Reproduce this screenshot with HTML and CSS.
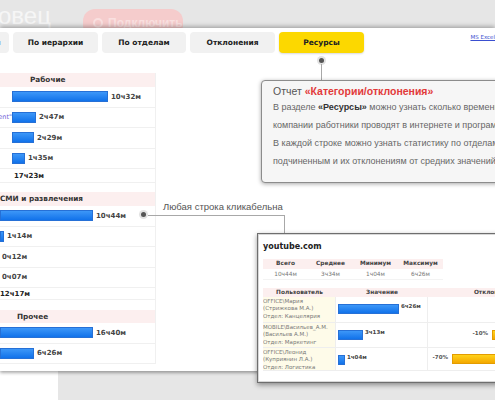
FILE: index.html
```html
<!DOCTYPE html>
<html lang="ru">
<head>
<meta charset="utf-8">
<title>Ресурсы</title>
<link rel="stylesheet" href="styles.css">
</head>
<body>
<div class="top">
  <div class="logo">овец</div>
  <div class="pill"><span class="pill-ico"></span>Подключить</div>
</div>
<div class="panel">
  <div class="tabs">
    <div class="tab tab-first">По категориям</div>
    <div class="tab">По иерархии</div>
    <div class="tab tab-84">По отделам</div>
    <div class="tab">Отклонения</div>
    <div class="tab tab-active">Ресурсы</div>
    <a class="excel">MS Excel</a>
  </div>

  <div class="left">
    <div class="sec sec1">
      <div class="sec-head">Рабочие</div>
      <div class="row"><div class="name"></div><div class="bar" style="width:96px"></div><span class="val">10ч32м</span></div>
      <div class="row"><div class="name">"Agent"</div><div class="bar" style="width:24px"></div><span class="val">2ч47м</span></div>
      <div class="row"><div class="name"></div><div class="bar" style="width:22px"></div><span class="val">2ч29м</span></div>
      <div class="row"><div class="name"></div><div class="bar" style="width:13px"></div><span class="val">1ч35м</span></div>
      <div class="total">17ч23м</div>
    </div>
    <div class="sec sec2">
      <div class="sec-head">СМИ и развлечения</div>
      <div class="row"><div class="bar" style="width:93px"></div><span class="val">10ч44м</span></div>
      <div class="row"><div class="bar" style="width:4px"></div><span class="val">1ч14м</span></div>
      <div class="row"><span class="val val-nobar">0ч12м</span></div>
      <div class="row"><span class="val val-nobar">0ч07м</span></div>
      <div class="total">12ч17м</div>
    </div>
    <div class="sec sec3">
      <div class="sec-head">Прочее</div>
      <div class="row"><div class="bar" style="width:93px"></div><span class="val">16ч40м</span></div>
      <div class="row"><div class="bar" style="width:34px"></div><span class="val">6ч26м</span></div>
    </div>
  </div>

  <div class="dot dot1"></div>
  <div class="vline vline1"></div>
  <div class="callout">
    <div class="callout-title">Отчет <b>«Категории/отклонения»</b></div>
    <p>В разделе <b>«Ресурсы»</b> можно узнать сколько времени</p>
    <p>компании работники проводят в интернете и программах.</p>
    <p>В каждой строке можно узнать статистику по отделам,</p>
    <p>подчиненным и их отклонениям от средних значений.</p>
  </div>

  <div class="dot dot2"></div>
  <div class="hline"></div>
  <div class="vline vline2"></div>
  <div class="hint">Любая строка кликабельна</div>

  <div class="popup">
    <div class="popup-title">youtube.com</div>
    <div class="sum">
      <div class="sum-h">Всего</div>
      <div class="sum-h">Среднее</div>
      <div class="sum-h">Минимум</div>
      <div class="sum-h">Максимум</div>
      <div class="sum-v">10ч44м</div>
      <div class="sum-v">3ч34м</div>
      <div class="sum-v">1ч04м</div>
      <div class="sum-v">6ч26м</div>
    </div>
    <div class="tbl">
      <div class="th">Пользователь</div>
      <div class="th">Значение</div>
      <div class="th">Отклонения</div>

      <div class="user r1">OFFICE\Мария<br>(Стрижкова М.А.)<br>Отдел: Канцелярия</div>
      <div class="value r1"><div class="bar bar-s" style="width:61px"></div><span class="pv">6ч26м</span></div>
      <div class="dev r1"></div>

      <div class="user r2">MOBILE\Васильев_А.М.<br>(Васильев А.М.)<br>Отдел: Маркетинг</div>
      <div class="value r2"><div class="bar bar-s" style="width:25px"></div><span class="pv">3ч13м</span></div>
      <div class="dev r2"><span class="dv">-10%</span><div class="obar" style="width:67px"></div></div>

      <div class="user r3">OFFICE\Леонид<br>(Куприянин Л.А.)<br>Отдел: Логистика</div>
      <div class="value r3"><div class="bar bar-s" style="width:7px"></div><span class="pv">1ч04м</span></div>
      <div class="dev r3"><span class="dv">-70%</span><div class="obar" style="width:107px"></div></div>
    </div>
  </div>
</div>
<div class="below"><div class="below-white"></div></div>
</body>
</html>
```

FILE: styles.css
```css
html, body {
  margin: 0;
  padding: 0;
}
body {
  width: 495px;
  height: 400px;
  overflow: hidden;
  background: #e6e6e6;
  font-family: "DejaVu Sans", Verdana, sans-serif;
}

/* top band */
.top {
  height: 28px;
  overflow: hidden;
  display: flex;
  align-items: flex-start;
}
.logo {
  width: 85px;
  flex: none;
  margin-top: 3px;
  margin-left: -2px;
  font-family: "Liberation Sans", Arial, sans-serif;
  font-size: 24px;
  line-height: 26px;
  color: #f6f6f6;
}
.pill {
  flex: none;
  width: 100px;
  height: 28px;
  margin-top: 9px;
  padding-left: 10px;
  box-sizing: border-box;
  border-radius: 12px;
  background: #f5cccc;
  display: flex;
  align-items: center;
  gap: 5px;
  font-family: "Liberation Sans", Arial, sans-serif;
  font-weight: bold;
  font-size: 12px;
  color: #f9e0e0;
}
.pill-ico {
  width: 10px;
  height: 10px;
  border-radius: 50%;
  border: 2px solid #f9e0e0;
  box-sizing: border-box;
}

/* main panel */
.panel {
  position: relative;
  z-index: 1;
  height: 343px;
  background: #fff;
  box-shadow: 0 -2px 4px rgba(0, 0, 0, 0.25), 0 2px 3px rgba(0, 0, 0, 0.3);
}

.tabs {
  display: flex;
  gap: 4px;
  padding-top: 4px;
  height: 21px;
}
.tab {
  flex: none;
  width: 85px;
  height: 21px;
  border-radius: 4px;
  background: #f1f1f1;
  display: flex;
  align-items: center;
  justify-content: center;
  font-weight: bold;
  font-size: 7.5px;
  color: #222;
  white-space: nowrap;
}
.tab-first {
  width: 81px;
  margin-left: -72px;
}
.tab-84 {
  width: 84px;
}
.tab-active {
  background: #fcd800;
  box-shadow: 0 1px 2px rgba(0, 0, 0, 0.15);
}
.excel {
  margin-left: auto;
  margin-top: 2px;
  align-self: flex-start;
  font-size: 5.5px;
  color: #3a4fd0;
  text-decoration: underline;
  white-space: nowrap;
}

/* left report table */
.left {
  width: 156px;
  box-sizing: border-box;
  margin-top: 20px;
  border-right: 1px solid #f0f0f0;
}
.sec-head {
  height: 14px;
  line-height: 14px;
  background: #fcefef;
  font-weight: bold;
  font-size: 7.3px;
  color: #333;
  white-space: nowrap;
}
.sec1 .sec-head { padding-left: 30px; }
.sec2 { margin-top: 9px; }
.sec2 .sec-head { padding-left: 0; }
.sec3 { margin-top: 10px; }
.sec3 .sec-head { padding-left: 17px; height: 13px; line-height: 13px; }

.row {
  height: 20.5px;
  box-sizing: border-box;
  border-bottom: 1px solid #f0f0f0;
  display: flex;
  align-items: center;
}
.name {
  flex: none;
  width: 12px;
  overflow: hidden;
  display: flex;
  justify-content: flex-end;
  font-size: 6.5px;
  color: #6b5bd6;
  white-space: nowrap;
}
.bar {
  flex: none;
  height: 11px;
  box-sizing: border-box;
  background: linear-gradient(#3d97f8, #1172ea);
  border: 1px solid #2670d6;
}
.val {
  margin-left: 3px;
  font-weight: bold;
  font-size: 7px;
  color: #444;
  white-space: nowrap;
}
.val-nobar { margin-left: 2px; }
.total {
  height: 14px;
  box-sizing: border-box;
  border-bottom: 1px solid #f0f0f0;
  display: flex;
  align-items: center;
  font-weight: bold;
  font-size: 7px;
  color: #222;
}
.sec1 .total { padding-left: 14px; }
.sec2 .total { height: 12px; }

/* connectors */
.dot {
  position: absolute;
  width: 5px;
  height: 5px;
  border-radius: 50%;
  background: #555;
  box-shadow: 0 0 0 2px #e2e2e2;
}
.dot1 { left: 319px; top: 30px; }
.dot2 { left: 141px; top: 184px; }
.vline {
  position: absolute;
  width: 1px;
  background: #a8a8a8;
}
.vline1 { left: 321px; top: 36px; height: 16px; }
.vline2 { left: 284px; top: 187px; height: 18px; }
.hline {
  position: absolute;
  left: 148px;
  top: 187px;
  width: 137px;
  height: 1px;
  background: #a8a8a8;
}
.hint {
  position: absolute;
  left: 163px;
  top: 173px;
  font-family: "Liberation Sans", Arial, sans-serif;
  font-size: 9.5px;
  line-height: 12px;
  color: #555;
  white-space: nowrap;
}

/* callout */
.callout {
  position: absolute;
  left: 261px;
  top: 52px;
  width: 260px;
  height: 103px;
  box-sizing: border-box;
  padding: 3px 0 0 11px;
  border: 1px solid #8c8c8c;
  border-radius: 4px;
  background: #f6f6f6;
  box-shadow: 0 1px 4px rgba(0, 0, 0, 0.35);
  font-family: "Liberation Sans", Arial, sans-serif;
  color: #666;
  white-space: nowrap;
  overflow: hidden;
}
.callout-title {
  font-size: 10.5px;
  line-height: 14px;
  color: #555;
}
.callout-title b { color: #e23a3a; }
.callout p {
  margin: 0;
  font-size: 9px;
  line-height: 18px;
}
.callout p b { color: #333; }

/* popup */
.popup {
  position: absolute;
  left: 257px;
  top: 205px;
  width: 260px;
  height: 150px;
  box-sizing: border-box;
  padding: 7px 0 0 5px;
  background: #fff;
  border: 1px solid #6e6e6e;
  box-shadow: inset 0 0 0 1px #d8d8d8, 0 2px 5px rgba(0, 0, 0, 0.4);
  overflow: hidden;
}
.popup-title {
  font-weight: bold;
  font-size: 8px;
  line-height: 12px;
  color: #222;
}
.sum {
  margin-top: 6px;
  display: grid;
  grid-template-columns: repeat(4, 45px);
}
.sum-h {
  height: 9.5px;
  line-height: 9.5px;
  background: #fcefef;
  text-align: center;
  font-weight: bold;
  font-size: 5.8px;
  color: #444;
}
.sum-v {
  height: 10px;
  line-height: 10px;
  text-align: center;
  font-size: 5.8px;
  color: #777;
  border-bottom: 1px solid #f3f3f3;
}
.tbl {
  margin-top: 8px;
  display: grid;
  grid-template-columns: 73px 92px 132px;
  grid-template-rows: 9px 26px 25px 23px;
}
.th {
  background: #fcefef;
  text-align: center;
  line-height: 9px;
  font-weight: bold;
  font-size: 5.8px;
  color: #444;
  white-space: nowrap;
}
.user, .value, .dev {
  border-bottom: 1px solid #eee;
  border-right: 1px solid #eee;
  box-sizing: border-box;
}
.user {
  background: #fefbe9;
  padding-top: 1px;
  font-size: 5.5px;
  line-height: 7.6px;
  color: #777;
  white-space: nowrap;
  overflow: hidden;
}
.value {
  display: flex;
  align-items: flex-start;
  padding: 7.5px 0 0 2px;
}
.bar-s { height: 10px; }
.pv {
  margin-left: 2px;
  margin-top: -1px;
  font-weight: bold;
  font-size: 5.5px;
  color: #444;
  white-space: nowrap;
}
.dev {
  display: flex;
  justify-content: flex-end;
  align-items: flex-start;
  padding-top: 6px;
}
.r2.dev { padding-top: 7px; }
.dv {
  margin-right: 4px;
  font-weight: bold;
  font-size: 5.5px;
  color: #555;
  white-space: nowrap;
}
.obar {
  flex: none;
  height: 10px;
  box-sizing: border-box;
  background: linear-gradient(#ffd21a, #f4a800);
  border: 1px solid #e39c00;
}

/* below panel */
.below {
  height: 29px;
  display: flex;
}
.below-white {
  width: 58px;
  background: #fff;
}
```
